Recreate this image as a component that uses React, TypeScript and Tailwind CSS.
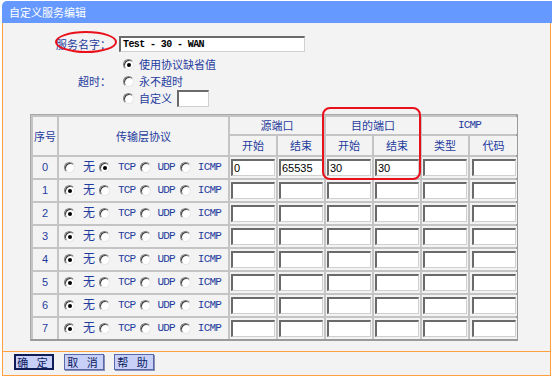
import React from "react";

const CJK = { fontFamily: '"Noto Sans CJK SC", "Liberation Sans", sans-serif' };
const MONO = { fontFamily: '"Liberation Mono", "Noto Sans CJK SC", monospace' };

function Radio({ checked = false }: { checked?: boolean }) {
  return (
    <span className="relative flex h-[11px] w-[11px] shrink-0 items-center justify-center rounded-full border border-t-[#808080] border-l-[#808080] border-b-[#e8e8e8] border-r-[#e8e8e8] bg-white shadow-[inset_1px_1px_0_#404040]">
      {checked && <span className="h-[4px] w-[4px] rounded-full bg-black" />}
    </span>
  );
}

function Box({ value = "", w = "w-[44px]" }: { value?: string; w?: string }) {
  return (
    <div
      className={`${w} h-[17px] border-t-2 border-l-2 border-t-[#6a6a6a] border-l-[#6a6a6a] border-b border-r border-b-[#d0d0d0] border-r-[#d0d0d0] bg-white pl-[1px] text-[11px] leading-[14px] text-black`}
      style={{ fontFamily: '"Liberation Sans", sans-serif' }}
    >
      {value}
    </div>
  );
}

const rows = [
  { proto: 1, vals: ["0", "65535", "30", "30", "", ""] },
  ...Array.from({ length: 7 }, () => ({ proto: 0, vals: ["", "", "", "", "", ""] })),
];

const cell = "bg-[#f3f3f3] flex items-center justify-center";

function ProtoCell({ sel }: { sel: number }) {
  const lbl = "text-[11px] leading-none tracking-[-0.8px]";
  return (
    <div className="flex items-center bg-[#f3f3f3] text-[#1f3c9e]">
      <span className="ml-[5px] flex">
        <Radio checked={sel === 0} />
      </span>
      <span className="ml-[8px] pb-[3px] text-[12px] leading-none" style={CJK}>无</span>
      <span className="ml-[4px] flex">
        <Radio checked={sel === 1} />
      </span>
      <span className={`ml-[8px] ${lbl}`} style={MONO}>TCP</span>
      <span className="ml-[5px] flex">
        <Radio checked={sel === 2} />
      </span>
      <span className={`ml-[6px] ${lbl}`} style={MONO}>UDP</span>
      <span className="ml-[5px] flex">
        <Radio checked={sel === 3} />
      </span>
      <span className={`ml-[7px] ${lbl}`} style={MONO}>ICMP</span>
    </div>
  );
}

export default function App() {
  return (
    <div className="relative h-[376px] w-[553px] overflow-hidden bg-white text-[#1f3c9e]" style={CJK}>
      {/* title bar */}
      <div className="ml-[2px] mt-[1px] flex h-[22px] w-[550px] items-center rounded-tl-[5px] bg-[#6699ff] pl-[7px] text-[11px] text-white">
        自定义服务编辑
      </div>

      <div className="ml-[2px] h-[353px] w-[549px] border-x border-b border-[#ffa040] bg-[#f3f3f3]">
        <div className="h-[329px] border-b border-[#ffa040]">
          {/* form */}
          <div className="grid grid-cols-[108px_auto] gap-x-[8px] pt-[13px] text-[11px]">
            <div className="flex h-[16px] items-center justify-end">服务名字：</div>
            <div className="flex h-[16px] items-center">
              <div
                className="h-[16px] w-[186px] border-t-2 border-l-2 border-t-[#6a6a6a] border-l-[#6a6a6a] border-b border-r border-b-[#d0d0d0] border-r-[#d0d0d0] bg-white pl-[2px] text-[10px] font-bold leading-[13px] tracking-[-0.6px] text-black"
                style={MONO}
              >
                Test - 30 - WAN
              </div>
            </div>

            <div className="mt-[4px] h-[17px]" />
            <div className="mt-[4px] flex h-[17px] items-center gap-[5px] pl-[4px]">
              <Radio checked />
              <span>使用协议缺省值</span>
            </div>

            <div className="flex h-[17px] items-center justify-end">超时：</div>
            <div className="flex h-[17px] items-center gap-[5px] pl-[4px]">
              <Radio />
              <span>永不超时</span>
            </div>

            <div className="h-[17px]" />
            <div className="flex h-[17px] items-center gap-[5px] pl-[4px]">
              <Radio />
              <span>自定义</span>
              <Box w="w-[32px]" />
            </div>
          </div>

          {/* table */}
          <div className="ml-[27px] mt-[7px] grid w-[488px] grid-cols-[24px_169px_46px_46px_46px_46px_46px_47px] grid-rows-[17px_19px_repeat(8,21px)] gap-[2px] border-t border-l border-t-[#a8a8a8] border-l-[#a8a8a8] bg-[#c4c4c4] p-[2px] text-[11px] shadow-[inset_-2px_-2px_0_#9a9a9a]">
            <div className={`${cell} row-span-2`}>序号</div>
            <div className={`${cell} row-span-2`}>传输层协议</div>
            <div className={`${cell} col-span-2`}>源端口</div>
            <div className={`${cell} col-span-2`}>目的端口</div>
            <div className={`${cell} col-span-2 text-[11px] tracking-[-0.8px]`} style={MONO}>
              ICMP
            </div>
            <div className={cell}>开始</div>
            <div className={cell}>结束</div>
            <div className={cell}>开始</div>
            <div className={cell}>结束</div>
            <div className={cell}>类型</div>
            <div className={cell}>代码</div>

            {rows.map((r, i) => (
              <React.Fragment key={i}>
                <div className={cell} style={{ fontFamily: '"Liberation Sans", sans-serif' }}>
                  {i}
                </div>
                <ProtoCell sel={r.proto} />
                {r.vals.map((v, j) => (
                  <div key={j} className={cell}>
                    <Box value={v} />
                  </div>
                ))}
              </React.Fragment>
            ))}
          </div>
        </div>

        {/* buttons */}
        <div className="flex items-center gap-[10px] pl-[11px] pt-[2px] text-[11px] text-[#0a1a60]">
          <button className="h-[16px] w-[40px] border-2 border-[#101c58] bg-[#c8d0f8] leading-[12px] tracking-[3px]">
            确 定
          </button>
          <button className="h-[16px] w-[40px] border border-[#5868a8] bg-[#c8d0f8] leading-[14px] tracking-[3px] shadow-[1px_1px_0_#8890b8]">
            取 消
          </button>
          <button className="h-[16px] w-[40px] border border-[#5868a8] bg-[#c8d0f8] leading-[14px] tracking-[3px] shadow-[1px_1px_0_#8890b8]">
            帮 助
          </button>
        </div>
      </div>

      {/* red annotations */}
      <div className="pointer-events-none absolute left-[55px] top-[31px] h-[22px] w-[62px] rounded-[50%] border-2 border-[#e8101a]" />
      <div className="pointer-events-none absolute left-[322px] top-[107px] h-[73px] w-[99px] rounded-[8px] border-2 border-[#e8101a]" />
    </div>
  );
}
